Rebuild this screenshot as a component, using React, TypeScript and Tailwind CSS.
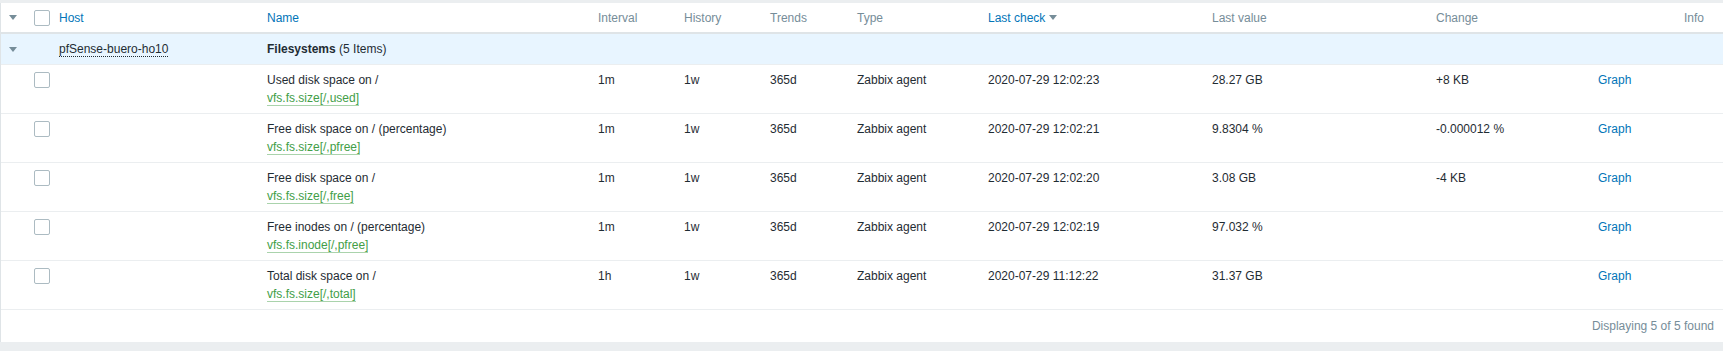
import * as React from 'react';

interface Item {
  name: string;
  key: string;
  interval: string;
  lastCheck: string;
  lastValue: string;
  change: string;
}

const items: Item[] = [
  { name: 'Used disk space on /', key: 'vfs.fs.size[/,used]', interval: '1m', lastCheck: '2020-07-29 12:02:23', lastValue: '28.27 GB', change: '+8 KB' },
  { name: 'Free disk space on / (percentage)', key: 'vfs.fs.size[/,pfree]', interval: '1m', lastCheck: '2020-07-29 12:02:21', lastValue: '9.8304 %', change: '-0.000012 %' },
  { name: 'Free disk space on /', key: 'vfs.fs.size[/,free]', interval: '1m', lastCheck: '2020-07-29 12:02:20', lastValue: '3.08 GB', change: '-4 KB' },
  { name: 'Free inodes on / (percentage)', key: 'vfs.fs.inode[/,pfree]', interval: '1m', lastCheck: '2020-07-29 12:02:19', lastValue: '97.032 %', change: '' },
  { name: 'Total disk space on /', key: 'vfs.fs.size[/,total]', interval: '1h', lastCheck: '2020-07-29 11:12:22', lastValue: '31.37 GB', change: '' },
];

// column template: arrow, checkbox, host, name, interval, history, trends, type, last check, last value, change, graph, info
const cols =
  'grid grid-cols-[33px_25px_208px_331px_86px_86px_87px_131px_224px_224px_162px_86px_1fr]';

function Arrow({ className = '' }: { className?: string }) {
  return (
    <svg width="8" height="5" viewBox="0 0 8 5" className={className}>
      <path d="M0 0 L8 0 L4 5 Z" fill="#768d99" />
    </svg>
  );
}

function Checkbox() {
  return <div className="w-4 h-4 rounded-[2px] border border-[#acbbc2] bg-white" />;
}

export default function App() {
  return (
    <div className="w-[1723px] h-[351px] bg-[#ebeef0] pt-[3px] font-['Liberation_Sans',Arial,sans-serif] text-[12px] leading-[14px] text-[#1f2c33] overflow-hidden">
      <div className="bg-white border-l border-[#dfe4e7]">
        {/* header */}
        <div className={`${cols} h-[31px] items-center border-b-2 border-[#dfe4e7] text-[#768d99]`}>
          <div className="pl-[8px] flex"><Arrow /></div>
          <div><Checkbox /></div>
          <div className="text-[#0275b8]">Host</div>
          <div className="text-[#0275b8]">Name</div>
          <div>Interval</div>
          <div>History</div>
          <div>Trends</div>
          <div>Type</div>
          <div className="text-[#0275b8] flex items-center gap-[4px]">
            Last check <Arrow />
          </div>
          <div>Last value</div>
          <div>Change</div>
          <div />
          <div>Info</div>
        </div>

        {/* group row */}
        <div className={`${cols} h-[31px] items-center border-b border-[#ebeef0] bg-[#e8f5ff]`}>
          <div className="pl-[8px] flex"><Arrow /></div>
          <div />
          <div>
            <span className="border-b border-dotted border-[#1f2c33]">pfSense-buero-ho10</span>
          </div>
          <div>
            <span className="font-bold">Filesystems</span> (5 Items)
          </div>
        </div>

        {/* items */}
        {items.map((it) => (
          <div key={it.key} className={`${cols} h-[49px] border-b border-[#ebeef0] pt-[6px] leading-[18px]`}>
            <div />
            <div className="pt-[1px]"><Checkbox /></div>
            <div />
            <div>
              <div>{it.name}</div>
              <div>
                <span className="text-[#429e47] border-b border-[rgba(66,158,71,0.45)] leading-[14px]">{it.key}</span>
              </div>
            </div>
            <div>{it.interval}</div>
            <div>1w</div>
            <div>365d</div>
            <div>Zabbix agent</div>
            <div>{it.lastCheck}</div>
            <div>{it.lastValue}</div>
            <div>{it.change}</div>
            <div className="text-[#0275b8]">Graph</div>
            <div />
          </div>
        ))}

        {/* footer */}
        <div className="h-[32px] flex items-center justify-end pr-[9px] text-[#768d99]">
          Displaying 5 of 5 found
        </div>
      </div>
    </div>
  );
}
